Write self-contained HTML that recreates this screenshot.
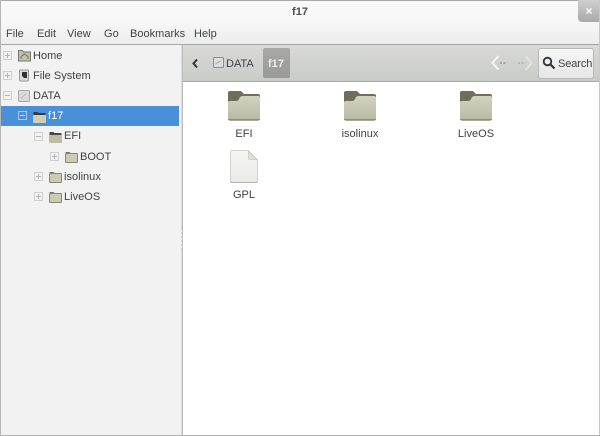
<!DOCTYPE html>
<html><head><meta charset="utf-8"><style>
html,body{margin:0;padding:0;background:#fff}
#w{position:relative;width:600px;height:436px;overflow:hidden;background:#fff;font-family:"Liberation Sans",sans-serif;font-size:11px;color:#3f4242;filter:blur(.35px)}
#w div,#w svg{position:absolute}
.t{white-space:nowrap;line-height:14px;letter-spacing:.02px}
.c{text-align:center;width:80px}
.e{width:7px;height:7px;border:1px solid #cfcfcf;background:#f2f2f2;box-sizing:content-box}
.e:before{content:"";position:absolute;left:1px;top:3px;width:5px;height:1px;background:#b4b4b4}
.p:after{content:"";position:absolute;left:3px;top:1px;width:1px;height:5px;background:#b4b4b4}
</style></head><body><div id="w">
<div style="left:0;top:0;width:600px;height:44px;background:linear-gradient(#f9f9f9,#f7f7f7 50%,#ececec)"></div>
<div style="left:0;top:0;width:600px;height:1px;background:#a9a9a9"></div>
<div class="t" style="left:260px;top:5px;width:80px;text-align:center;font-weight:bold;color:#4a4d4d">f17</div>
<div style="left:578px;top:0;width:21px;height:22px;background:linear-gradient(#cfcfcf,#a9a9a9);border-radius:0 0 0 4px"></div>
<div style="left:584px;top:3px;width:10px;text-align:center;color:#fff;font-size:12px;font-weight:bold;line-height:16px">×</div>
<div class="t" style="left:6px;top:27px">File</div>
<div class="t" style="left:37px;top:27px">Edit</div>
<div class="t" style="left:67px;top:27px">View</div>
<div class="t" style="left:104px;top:27px">Go</div>
<div class="t" style="left:130px;top:27px">Bookmarks</div>
<div class="t" style="left:194px;top:27px">Help</div>
<div style="left:0;top:44px;width:600px;height:1px;background:#a6a6a6"></div>

<div style="left:1px;top:45px;width:181px;height:390px;background:#f2f2f2"></div>
<div style="left:182px;top:45px;width:1px;height:391px;background:#bdbdbd"></div>
<div style="left:181px;top:45px;width:1px;height:391px;background:#dcdcdc"></div>
<div style="left:0;top:0;width:1px;height:436px;background:#b5b5b5"></div>
<div style="left:599px;top:0;width:1px;height:436px;background:#c9c9c9"></div>
<div style="left:0;top:435px;width:600px;height:1px;background:#b0b0b0"></div>
<div style="left:180.500px;top:228px;width:1px;height:22px;background:repeating-linear-gradient(#d0d0d0 0 2px,#f2f2f2 2px 4px)"></div>

<div style="left:1px;top:106px;width:178px;height:20px;background:#4a90d9"></div>

<div class="e p" style="left:3px;top:51px"></div>
<div class="e p" style="left:3px;top:71px"></div>
<div class="e" style="left:3px;top:91px"></div>
<div class="e" style="left:18px;top:111px;background:#4a90d9;border-color:#a9c9ec"><span style="position:absolute;left:1px;top:3px;width:5px;height:1px;background:#cfe1f5"></span></div>
<div class="e" style="left:34px;top:132px"></div>
<div class="e p" style="left:50px;top:152px"></div>
<div class="e p" style="left:34px;top:172px"></div>
<div class="e p" style="left:34px;top:192px"></div>

<!-- tree icons -->
<svg style="left:18px;top:49px" width="13" height="13"><path d="M0.500 1.500h4l1 1.500h7v9h-12z" fill="#c2c2ab" stroke="#77776a"/><path d="M3 10V7.500l3.500-2.500L10 7.500V10" fill="none" stroke="#6e6e5a"/></svg>
<svg style="left:19px;top:69px" width="11" height="13"><rect x="0.500" y="1" width="9" height="11" rx="1" fill="#dcdcdc" stroke="#9a9a9a"/><path d="M3 3h5v6H5L3 7z" fill="#333"/></svg>
<svg style="left:18px;top:90px" width="12" height="12"><rect x="0.500" y="0.500" width="11" height="11" rx="1" fill="#dadada" stroke="#a6a6a6"/><path d="M3 8l5-4" stroke="#b4b4b4"/></svg>
<svg style="left:33px;top:111px" width="13" height="12"><path d="M0.500 1h4l1 1h7v7h-12z" fill="#3d3a30"/><rect x="0" y="4" width="13" height="8" rx="1" fill="#cfcfb8"/></svg>
<svg style="left:49px;top:131px" width="13" height="12"><path d="M0.500 1h4l1 1h7v7h-12z" fill="#4a483c"/><rect x="0" y="4" width="13" height="8" rx="1" fill="#bdbda6"/></svg>
<svg style="left:65px;top:151px" width="13" height="12"><path d="M0.500 1h4l1 1h7v7h-12z" fill="#77755f"/><rect x="0.500" y="2.500" width="12" height="9" rx="1" fill="#cbcbb4" stroke="#8a8a74"/></svg>
<svg style="left:49px;top:171px" width="13" height="12"><path d="M0.500 1h4l1 1h7v7h-12z" fill="#77755f"/><rect x="0.500" y="2.500" width="12" height="9" rx="1" fill="#cbcbb4" stroke="#8a8a74"/></svg>
<svg style="left:49px;top:191px" width="13" height="12"><path d="M0.500 1h4l1 1h7v7h-12z" fill="#77755f"/><rect x="0.500" y="2.500" width="12" height="9" rx="1" fill="#cbcbb4" stroke="#8a8a74"/></svg>

<div class="t" style="left:33px;top:49px">Home</div>
<div class="t" style="left:33px;top:69px">File System</div>
<div class="t" style="left:33px;top:89px">DATA</div>
<div class="t" style="left:48px;top:109px;color:#fff">f17</div>
<div class="t" style="left:64px;top:129px">EFI</div>
<div class="t" style="left:80px;top:150px">BOOT</div>
<div class="t" style="left:64px;top:170px">isolinux</div>
<div class="t" style="left:64px;top:190px">LiveOS</div>

<!-- toolbar -->
<div style="left:183px;top:45px;width:416px;height:36px;background:linear-gradient(#d9dad7,#c9cbc7)"></div>
<div style="left:183px;top:81px;width:416px;height:1px;background:#a9aba7"></div>
<svg style="left:191px;top:58px" width="9" height="11"><path d="M6 1.500L2.500 5.500L6 9.500" fill="none" stroke="#2e3436" stroke-width="2"/></svg>
<svg style="left:213px;top:57px" width="11" height="12"><rect x="0.500" y="0.500" width="10" height="10" rx="1" fill="#dcdcdc" stroke="#8d8d8d"/><path d="M2.500 7l5-3" stroke="#aaa"/></svg>
<div class="t" style="left:226px;top:57px">DATA</div>
<div style="left:263px;top:48px;width:27px;height:30px;background:linear-gradient(#a8a9a6,#999a97);border-radius:2px"></div>
<div class="t" style="left:268px;top:57px;color:#eee;font-weight:bold">f17</div>
<svg style="left:490px;top:53px" width="20" height="20"><path d="M8.500 3L2.500 10l6 7" fill="none" stroke="#9a9c98" stroke-width="1" transform="translate(0 1)"/><path d="M8.500 3L2.500 10l6 7" fill="none" stroke="#f4f4f2" stroke-width="2.200"/><path d="M10 10h2M13.500 10h2" stroke="#8f918d" stroke-width="1.500"/></svg>
<svg style="left:516px;top:53px" width="18" height="20"><path d="M9.500 3l6 7-6 7" fill="none" stroke="#e3e4e1" stroke-width="2"/><path d="M2 10h2M5.500 10h2" stroke="#adafab" stroke-width="1.500"/></svg>
<div style="left:538px;top:48px;width:56px;height:31px;box-sizing:border-box;background:linear-gradient(#f6f6f6,#e6e6e6);border:1px solid #b9bab7;border-radius:3px"></div>
<svg style="left:542px;top:56px" width="14" height="14"><circle cx="5.500" cy="5.500" r="3.800" fill="none" stroke="#2e3436" stroke-width="1.800"/><path d="M8.500 8.500L12.500 12.500" stroke="#2e3436" stroke-width="2.200"/></svg>
<div class="t" style="left:558px;top:57px;letter-spacing:-.1px">Search</div>

<!-- content icons -->
<svg style="left:227px;top:90px" width="34" height="31"><defs><linearGradient id="g" x1="0" y1="0" x2="0" y2="1"><stop offset="0" stop-color="#d2d3bf"/><stop offset="1" stop-color="#b8b9a3"/></linearGradient></defs><path d="M1 12V3Q1 1 3 1H14L17 4H31Q33 4 33 6V12z" fill="#6f6e5b"/><path d="M1 12Q1 11 3 11H9Q11 11 12 9L13 7Q14 6 16 6H31Q33 6 33 8V28Q33 30 31 30H3Q1 30 1 28z" fill="url(#g)"/><path d="M1.500 29Q2 30 3 30H31Q32 30 32.500 29" fill="none" stroke="#77775f" stroke-width="1.200"/></svg>
<svg style="left:343px;top:90px" width="34" height="31"><path d="M1 12V3Q1 1 3 1H14L17 4H31Q33 4 33 6V12z" fill="#6f6e5b"/><path d="M1 12Q1 11 3 11H9Q11 11 12 9L13 7Q14 6 16 6H31Q33 6 33 8V28Q33 30 31 30H3Q1 30 1 28z" fill="url(#g)"/><path d="M1.500 29Q2 30 3 30H31Q32 30 32.500 29" fill="none" stroke="#77775f" stroke-width="1.200"/></svg>
<svg style="left:459px;top:90px" width="34" height="31"><path d="M1 12V3Q1 1 3 1H14L17 4H31Q33 4 33 6V12z" fill="#6f6e5b"/><path d="M1 12Q1 11 3 11H9Q11 11 12 9L13 7Q14 6 16 6H31Q33 6 33 8V28Q33 30 31 30H3Q1 30 1 28z" fill="url(#g)"/><path d="M1.500 29Q2 30 3 30H31Q32 30 32.500 29" fill="none" stroke="#77775f" stroke-width="1.200"/></svg>
<svg style="left:229px;top:149px" width="30" height="35"><defs><linearGradient id="f" x1="0" y1="0" x2="0" y2="1"><stop offset="0" stop-color="#f6f6f4"/><stop offset="1" stop-color="#e9e9e7"/></linearGradient></defs><path d="M1.500 2.500Q1.500 1.500 2.500 1.500H19L28.500 11V32Q28.500 33.500 27 33.500H3Q1.500 33.500 1.500 32z" fill="url(#f)" stroke="#d2d2d0"/><path d="M1.500 32.500Q2 33.500 3 33.500H27Q28 33.500 28.500 32.500" fill="none" stroke="#b5b5b3"/><path d="M19.500 2V9q0 1.500 1.500 1.500H28z" fill="#dededa" stroke="#bcbcb8" stroke-width=".6"/></svg>

<div class="t c" style="left:204px;top:127px">EFI</div>
<div class="t c" style="left:320px;top:127px">isolinux</div>
<div class="t c" style="left:436px;top:127px">LiveOS</div>
<div class="t c" style="left:204px;top:188px">GPL</div>
</div></body></html>
